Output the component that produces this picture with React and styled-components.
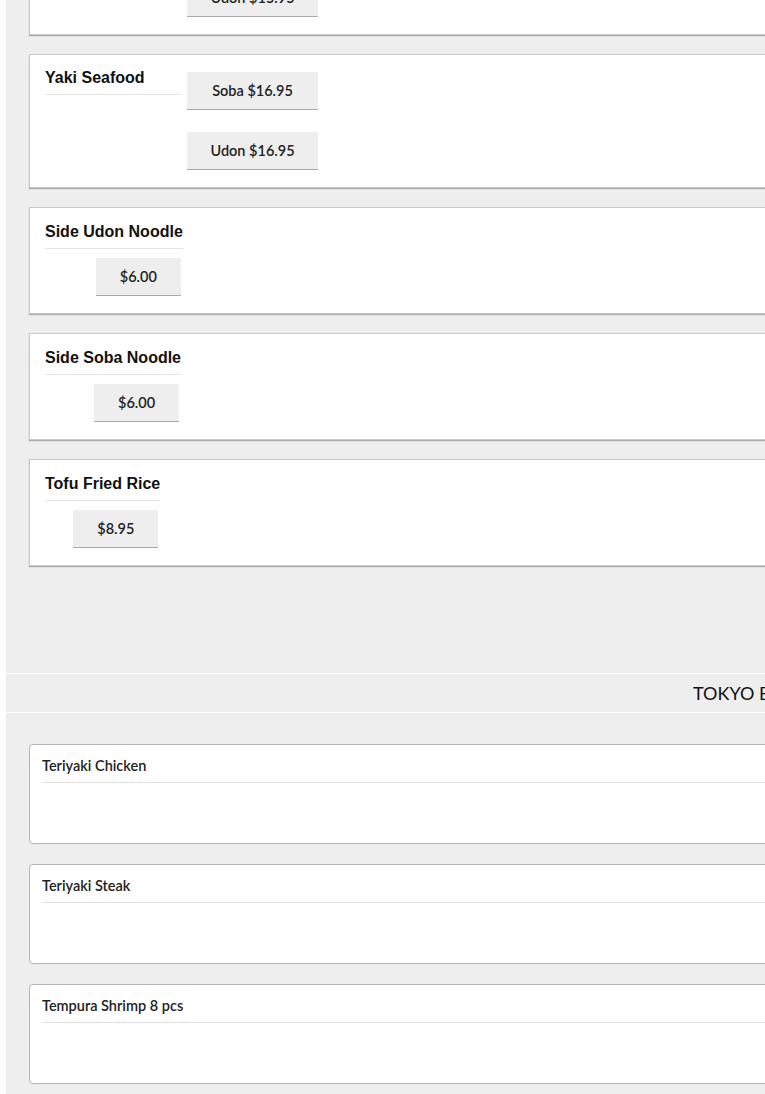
import React from "react";
import styled, { createGlobalStyle } from "styled-components";

const GlobalStyle = createGlobalStyle`
  html, body {
    margin: 0;
    padding: 0;
    background: #fff;
    overflow: hidden;
  }
  body {
    font-family: "Lato", "Open Sans", sans-serif;
    color: #222;
  }
`;

const Page = styled.div`
  padding-left: 6px;
`;

const Panel = styled.div`
  width: 1500px;
  margin-top: -99px;
  background: #eeeeee;
  padding-bottom: 40px;
`;

const CardList = styled.div`
  display: flex;
  flex-direction: column;
  gap: ${(p) => p.$gap}px;
  padding-left: 23px;
`;

const Card = styled.div`
  background: #fff;
  border: 1px solid #c9c9c9;
  box-shadow: 0 1px 1px rgba(0, 0, 0, 0.28);
  padding: 13px 0 17px 15px;
`;

const MultiRow = styled.div`
  display: flex;
  align-items: flex-start;
  gap: 6px;
`;

const SingleCol = styled.div`
  display: inline-flex;
  flex-direction: column;
  align-items: flex-end;
`;

const Title = styled.div`
  align-self: ${(p) => (p.$width ? "flex-start" : "stretch")};
  width: ${(p) => (p.$width ? `${p.$width}px` : "auto")};
  font-family: "Liberation Sans", Arial, sans-serif;
  font-weight: bold;
  font-size: 16px;
  line-height: 19px;
  color: #111;
  padding-bottom: 7px;
  border-bottom: 1px solid #e4e4e4;
  white-space: nowrap;
`;

const Options = styled.div`
  display: flex;
  flex-direction: column;
  gap: 22px;
  padding-top: 4px;
`;

const PriceButton = styled.button`
  width: ${(p) => p.$width}px;
  height: 38px;
  margin: ${(p) => (p.$single ? "9px 2px 0 0" : "0")};
  background: #eeeeee;
  border: none;
  border-bottom: 1px solid #a9a9a9;
  font-family: "Lato", "Open Sans", sans-serif;
  font-weight: 600;
  font-size: 14.5px;
  color: #222;
  padding: 0;
  cursor: pointer;
`;

const SectionHeader = styled.div`
  margin-top: 107px;
  height: 38px;
  border-top: 1px solid #fff;
  border-bottom: 1px solid #fff;
  display: flex;
  align-items: center;
  padding-left: 687px;
  font-family: "Lato", "Open Sans", sans-serif;
  font-size: 18px;
  color: #111;
  margin-bottom: 31px;
`;

const EntreeCard = styled.div`
  background: #fff;
  border: 1px solid #b5b5b5;
  border-radius: 4px;
  height: 98px;
  padding: 0 0 0 12px;
`;

const EntreeTitle = styled.div`
  font-family: "Lato", "Open Sans", sans-serif;
  font-weight: 600;
  font-size: 14.5px;
  color: #222;
  padding: 12px 0 8px;
  border-bottom: 1px solid #e2e2e2;
`;

const multiItems = [
  { name: "Yaki Chicken", options: ["Soba $15.95", "Udon $15.95"] },
  { name: "Yaki Seafood", options: ["Soba $16.95", "Udon $16.95"] },
];

const singleItems = [
  { name: "Side Udon Noodle", price: "$6.00" },
  { name: "Side Soba Noodle", price: "$6.00" },
  { name: "Tofu Fried Rice", price: "$8.95" },
];

const entrees = ["Teriyaki Chicken", "Teriyaki Steak", "Tempura Shrimp 8 pcs"];

const App = () => {
  return (
    <Page>
      <GlobalStyle />
      <Panel>
        <CardList $gap={19}>
          {multiItems.map((item) => (
            <Card key={item.name}>
              <MultiRow>
                <Title $width={136}>{item.name}</Title>
                <Options>
                  {item.options.map((opt) => (
                    <PriceButton key={opt} $width={131}>
                      {opt}
                    </PriceButton>
                  ))}
                </Options>
              </MultiRow>
            </Card>
          ))}
          {singleItems.map((item) => (
            <Card key={item.name}>
              <SingleCol>
                <Title>{item.name}</Title>
                <PriceButton $single $width={85}>
                  {item.price}
                </PriceButton>
              </SingleCol>
            </Card>
          ))}
        </CardList>

        <SectionHeader>TOKYO BENTO BOX</SectionHeader>

        <CardList $gap={20}>
          {entrees.map((name) => (
            <EntreeCard key={name}>
              <EntreeTitle>{name}</EntreeTitle>
            </EntreeCard>
          ))}
        </CardList>
      </Panel>
    </Page>
  );
};

export default App;
